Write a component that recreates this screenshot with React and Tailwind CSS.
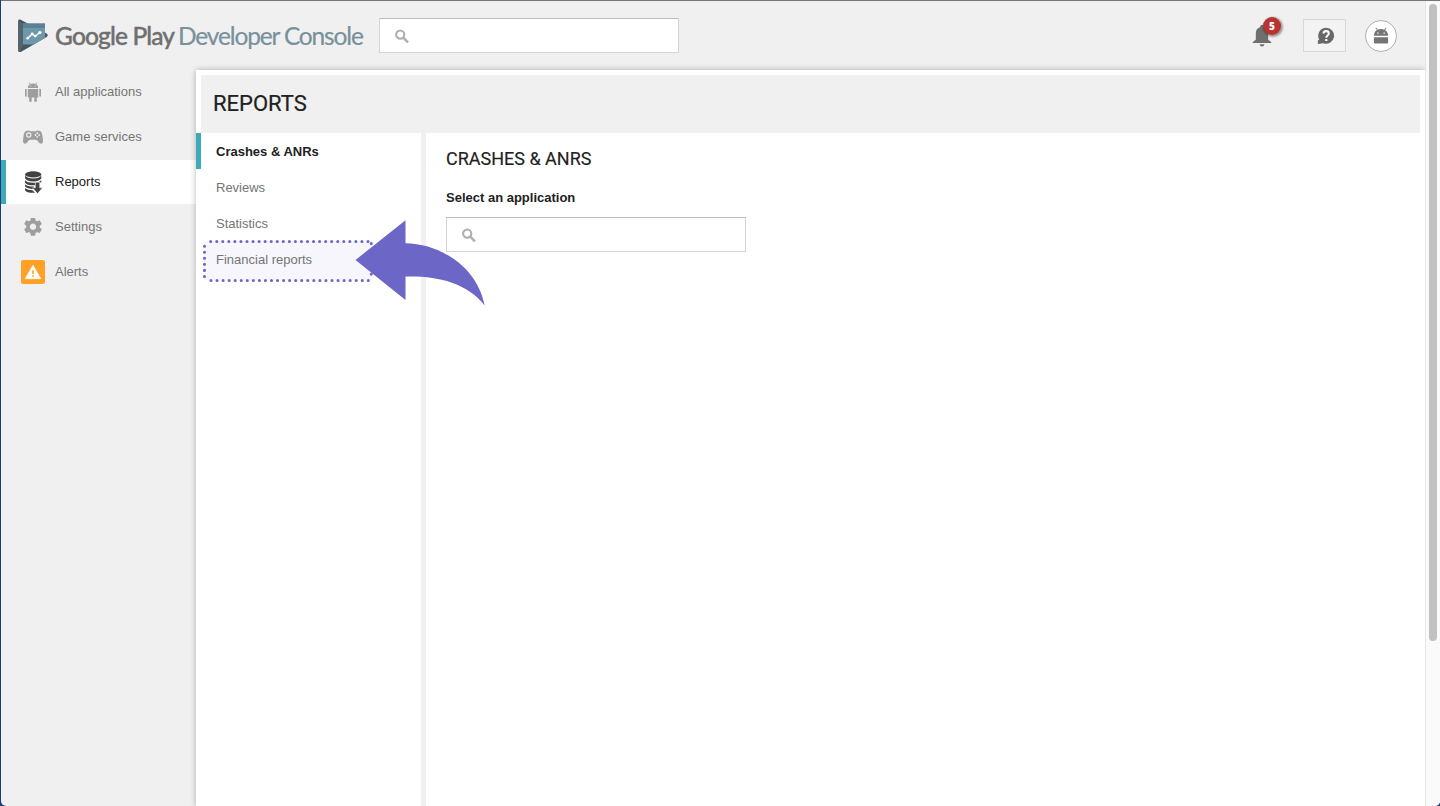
const SearchIcon = () => (
  <svg width="15" height="15" viewBox="0 0 15 15" fill="none" stroke="#afafaf">
    <circle cx="5.2" cy="5.6" r="4.1" strokeWidth="2.1" />
    <path d="M8.2 8.7l4.8 4.7" strokeWidth="2.4" />
  </svg>
);

const LogoMark = () => (
  <svg width="32" height="36" viewBox="0 0 32 36" className="shrink-0">
    <path d="M1.2 2.8Q1.4 1 3.2 1.6L29.6 15.6Q31.8 17.2 29.6 18.9L4.6 33.4Q1.6 34.8 1.2 33Z" fill="#44565f" />
    <path d="M1.2 2.4L6 5.8V28L2.6 33.8Q1.2 33.6 1.2 32Z" fill="#53646c" />
    <path d="M6 5.6H28V19.6L17 26.4H6Z" fill="#6d98ac" />
    <path d="M6 5.6H28V10H6Z" fill="#5b8193" />
    <path d="M10.8 20.2L15.2 16L18.2 18.2L22.9 14.5" fill="none" stroke="#fff" strokeWidth="1.4" />
    <g fill="#fff">
      <circle cx="10.8" cy="20.2" r="1.4" />
      <circle cx="15.2" cy="16" r="1.4" />
      <circle cx="18.2" cy="18.1" r="1.4" />
      <circle cx="22.9" cy="14.5" r="1.6" />
    </g>
  </svg>
);

const AndroidIcon = () => (
  <svg width="24" height="24" viewBox="0 0 24 24" fill="#9e9e9e">
    <path d="M6.8 7.9C6.8 5.3 8.8 3.5 12 3.5S17.2 5.3 17.2 7.9Z" />
    <path d="M8 2.4L9.6 4.8M16 2.4L14.4 4.8" stroke="#9e9e9e" strokeWidth=".8" />
    <path d="M6.8 9H17.2V17.4H15.8V21.8H13.3V17.4H10.7V21.8H8.2V17.4H6.8Z" />
    <path d="M4 9H5.7V16.6H4ZM18.3 9H20V16.6H18.3Z" />
    <path d="M9.2 5.4H10.2V6.3H9.2ZM13.8 5.4H14.8V6.3H13.8Z" fill="#f0f0f0" />
  </svg>
);

const GameIcon = () => (
  <svg width="24" height="24" viewBox="0 0 24 24">
    <path
      d="M4.8 5.9Q7.5 4.7 9.2 6.3H14.8Q16.5 4.7 19.2 5.9Q20.7 6.7 21.2 9.5L22 15Q22.2 18.6 19.9 18.7Q18.4 18.6 16.3 15.4Q15.8 14.7 14.9 14.7H9.1Q8.2 14.7 7.7 15.4Q5.6 18.6 4.1 18.7Q1.8 18.6 2 15L2.8 9.5Q3.3 6.7 4.8 5.9Z"
      fill="#9e9e9e"
    />
    <circle cx="7.8" cy="10" r="2.7" fill="#f0f0f0" />
    <circle cx="7.8" cy="10" r="1.5" fill="#9e9e9e" />
    <g fill="#f0f0f0">
      <circle cx="16.3" cy="8.2" r=".9" />
      <circle cx="16.3" cy="11.8" r=".9" />
      <circle cx="14.5" cy="10" r=".9" />
      <circle cx="18.1" cy="10" r=".9" />
    </g>
  </svg>
);

const ReportsIcon = () => (
  <svg width="24" height="24" viewBox="0 0 24 24" fill="#424242">
    <ellipse cx="12.2" cy="4.4" rx="8.1" ry="3.1" />
    <path d="M4.1 5.4Q6 8.4 12.2 8.4T20.3 5.4V8.3Q19 11.4 12.2 11.4T4.1 8.3Z" />
    <path d="M4.1 10.2Q6 12.7 12.2 12.7T20.3 10.2V12.4H14V15.3Q6 15.7 4.1 12.8Z" />
    <path d="M4.1 14.2Q6 16.5 12.8 16.6V19.2Q6 19 4.1 16.6Z" />
    <path d="M4.1 18Q6.5 20.2 11.5 20.3L14 22.7Q6 23.1 4.1 20.4Z" />
    <path d="M14.3 12.2H18.7V17.8H21.6L16.5 23.6L11.4 17.8H14.3Z" stroke="#fff" strokeWidth=".5" />
  </svg>
);

const GearIcon = () => (
  <svg width="18" height="18" viewBox="2 2.4 20 20" fill="#9e9e9e">
    <path d="M19.43 12.98c.04-.32.07-.64.07-.98s-.03-.66-.07-.98l2.11-1.65c.19-.15.24-.42.12-.64l-2-3.46c-.12-.22-.39-.3-.61-.22l-2.49 1c-.52-.4-1.08-.73-1.69-.98l-.38-2.65C14.46 2.18 14.25 2 14 2h-4c-.25 0-.46.18-.49.42l-.38 2.65c-.61.25-1.17.59-1.69.98l-2.49-1c-.23-.09-.49 0-.61.22l-2 3.46c-.13.22-.07.49.12.64l2.11 1.65c-.04.32-.07.65-.07.98s.03.66.07.98l-2.11 1.65c-.19.15-.24.42-.12.64l2 3.46c.12.22.39.3.61.22l2.49-1c.52.4 1.08.73 1.69.98l.38 2.65c.03.24.24.42.49.42h4c.25 0 .46-.18.49-.42l.38-2.65c.61-.25 1.17-.59 1.69-.98l2.49 1c.23.09.49 0 .61-.22l2-3.46c.12-.22.07-.49-.12-.64l-2.11-1.65zM12 15.5c-1.93 0-3.5-1.57-3.5-3.5s1.57-3.5 3.5-3.5 3.5 1.57 3.5 3.5-1.57 3.5-3.5 3.5z" />
  </svg>
);

const AlertIcon = () => (
  <svg width="24" height="24" viewBox="0 0 24 24">
    <rect width="24" height="24" rx="2" fill="#ffa126" />
    <path d="M12 5.2L19.9 18.7H4.1Z" fill="#fff" stroke="#fff" strokeWidth=".6" strokeLinejoin="round" />
    <path d="M11.2 10.2H12.8V14H11.2ZM11.2 15.2H12.8V16.8H11.2Z" fill="#ffa126" />
  </svg>
);

const BellIcon = () => (
  <svg width="20" height="24" viewBox="0 0 20 24" fill="#6f6f6f">
    <path d="M8.3 2.2Q8.3.7 10 .7T11.7 2.2V3Q16.2 4.4 16.2 9.6V15.8L19.2 18V19H.8V18L3.8 15.8V9.6Q3.8 4.4 8.3 3Z" />
    <path d="M7.6 20.2H12.4Q12.2 22.4 10 22.4T7.6 20.2Z" />
  </svg>
);

const HelpIcon = () => (
  <svg width="18" height="18" viewBox="0 0 18 18">
    <path d="M9.2.8a8 8 0 1 1-2.9 15.5L.9 17V13.6L2.2 12.7A8 8 0 0 1 9.2.8Z" fill="#686868" />
    <path d="M6.5 6.5Q6.6 4.1 9.2 4.1T11.8 6.4Q11.8 7.6 10.5 8.5Q9.3 9.4 9.3 10.8" fill="none" stroke="#fff" strokeWidth="2.1" />
    <path d="M8.2 12H10.4V14.1H8.2Z" fill="#fff" />
  </svg>
);

const BotIcon = () => (
  <svg width="16" height="18" viewBox="0 0 16 18" fill="#757575">
    <path d="M.9 8.8Q.9 5 4 3.1L2.5 1L3.1.5L4.9 2.7Q6.3 2 8 2T11.1 2.7L12.9.5L13.5 1L12 3.1Q15.1 5 15.1 8.8Z" />
    <path d="M.9 10.2H15.1V15.6Q15.1 16.6 14.1 16.6H1.9Q.9 16.6 .9 15.6Z" />
    <path d="M4.2 5.5H5.5V6.7H4.2ZM10.5 5.5H11.8V6.7H10.5Z" fill="#fff" />
  </svg>
);

const navItems = [
  { label: "All applications", icon: <AndroidIcon /> },
  { label: "Game services", icon: <GameIcon /> },
  { label: "Reports", icon: <ReportsIcon />, active: true },
  { label: "Settings", icon: <GearIcon /> },
  { label: "Alerts", icon: <AlertIcon /> },
];

function Header() {
  return (
    <header className="flex h-[69px] shrink-0 items-center pl-4">
      <LogoMark />
      <div className="ml-[6px] flex w-[310px] items-baseline whitespace-nowrap font-[Lato,sans-serif] text-[24.5px] leading-9">
        <span className="w-[123px] shrink-0 font-medium tracking-[-0.85px] text-[#6f6f6f] [-webkit-text-stroke:0.4px_#6f6f6f]">Google Play</span>
        <span className="tracking-[-1.15px] text-[#78909c] [-webkit-text-stroke:0.2px_#78909c]">Developer Console</span>
      </div>
      <div className="ml-[14px] flex h-[35px] w-[300px] items-center border border-[#d5d5d5] border-t-[#bdbdbd] bg-white pl-[15px] pt-[2px]">
        <SearchIcon />
      </div>
      <div className="ml-auto flex items-center pr-[28px]">
        <div className="relative mr-[31px] h-6 w-5">
          <BellIcon />
          <span className="absolute -top-[7px] left-[11px] flex h-[18px] w-[18px] items-center justify-center rounded-full bg-[#b93431] font-['Open_Sans',sans-serif] text-[10px] font-extrabold text-white shadow-[1px_1px_2px_1px_rgba(0,0,0,0.35)]">
            5
          </span>
        </div>
        <div className="mr-[19px] flex h-[33px] w-[43px] items-center justify-center border border-[#d8d8d8] bg-[#f3f3f3] pl-[3px]">
          <HelpIcon />
        </div>
        <div className="flex h-8 w-8 items-center justify-center rounded-full border border-[#b0b0b0] bg-white">
          <BotIcon />
        </div>
      </div>
    </header>
  );
}

function Sidebar() {
  return (
    <nav className="flex w-[195px] shrink-0 flex-col gap-px">
      {navItems.map((item) => (
        <div
          key={item.label}
          className={
            item.active
              ? "flex h-11 items-center border-l-[5px] border-[#3daab8] bg-white pl-[15px] text-[#212121]"
              : "flex h-11 items-center pl-5 text-[#757575]"
          }
        >
          <span className="flex h-6 w-6 items-center justify-center">{item.icon}</span>
          <span className="ml-[10px] leading-[18px]">{item.label}</span>
        </div>
      ))}
    </nav>
  );
}

function Callout() {
  return (
    <svg className="absolute left-0 top-[82px]" width="300" height="92" viewBox="196 215 300 92">
      <g fill="none" stroke="#6c67c6" strokeWidth="3.1" strokeLinecap="round">
        <path d="M210.7 241.5H370" strokeDasharray="0 6.05" />
        <path d="M371.3 243.5V243.6M371.3 274V274.1" />
        <path d="M211 280.5H372" strokeDasharray="0 6.05" />
        <path d="M204.5 246.2V277" strokeDasharray="0 6.05" />
      </g>
      <path d="M355.5 260L405.5 220.3V243.2C439 243.5 477 266 484.7 305.5C467 283 438 275.8 405.5 276.6V300Z" fill="#6c67c6" />
    </svg>
  );
}

function ReportsPanel() {
  return (
    <main className="z-10 flex flex-1 flex-col bg-white shadow-[0_0_6px_rgba(0,0,0,0.28)]">
      <div className="mx-[5px] mt-[5px] flex h-[58px] shrink-0 items-center bg-[#f0f0f0] pl-3">
        <h1 className="font-[Roboto,sans-serif] text-[22px] leading-7 text-[#212121] [-webkit-text-stroke:0.2px_#212121]">REPORTS</h1>
      </div>
      <div className="relative flex flex-1">
        <ul className="flex w-[225px] flex-col">
          <li className="flex h-9 items-center border-l-[5px] border-[#3daab8] pl-[15px] pt-[2px] font-bold text-[#212121]">Crashes &amp; ANRs</li>
          <li className="flex h-9 items-center pl-5 pt-[2px]">Reviews</li>
          <li className="flex h-9 items-center pl-5 pt-[2px]">Statistics</li>
          <li className="ml-2 mr-[49px] flex h-[39px] items-center bg-[#f7f6fc] pb-px pl-3">Financial reports</li>
        </ul>
        <div className="w-[5px] bg-[#f0f0f0]" />
        <section className="pl-5 pt-[14px] text-[#212121]">
          <h2 className="font-[Roboto,sans-serif] text-[18px] leading-6 [-webkit-text-stroke:0.15px_#212121]">CRASHES &amp; ANRS</h2>
          <p className="mt-[18px] font-bold leading-[18px]">Select an application</p>
          <div className="mt-[10px] flex h-[35px] w-[300px] items-center border border-[#d5d5d5] border-t-[#bdbdbd] pl-[15px] pt-[2px]">
            <SearchIcon />
          </div>
        </section>
        <Callout />
      </div>
    </main>
  );
}

export default function App() {
  return (
    <div className="flex h-[806px] w-[1440px] overflow-hidden bg-[#1d3a7a] font-['Liberation_Sans',Arial,sans-serif] text-[13px] leading-[18px] text-[#757575]">
      <div className="ml-px flex flex-1 overflow-hidden rounded-b-[5px] border-t border-[#77757a] bg-[#f0f0f0]">
        <div className="flex w-[1424px] flex-col">
          <Header />
          <div className="flex flex-1">
            <Sidebar />
            <ReportsPanel />
          </div>
        </div>
        <div className="z-20 flex flex-1 justify-center border-l border-[#e6e6e6] bg-[#fafafa] pt-[3px]">
          <div className="h-[637px] w-2 rounded-full bg-[#c1c1c1]" />
        </div>
      </div>
    </div>
  );
}
